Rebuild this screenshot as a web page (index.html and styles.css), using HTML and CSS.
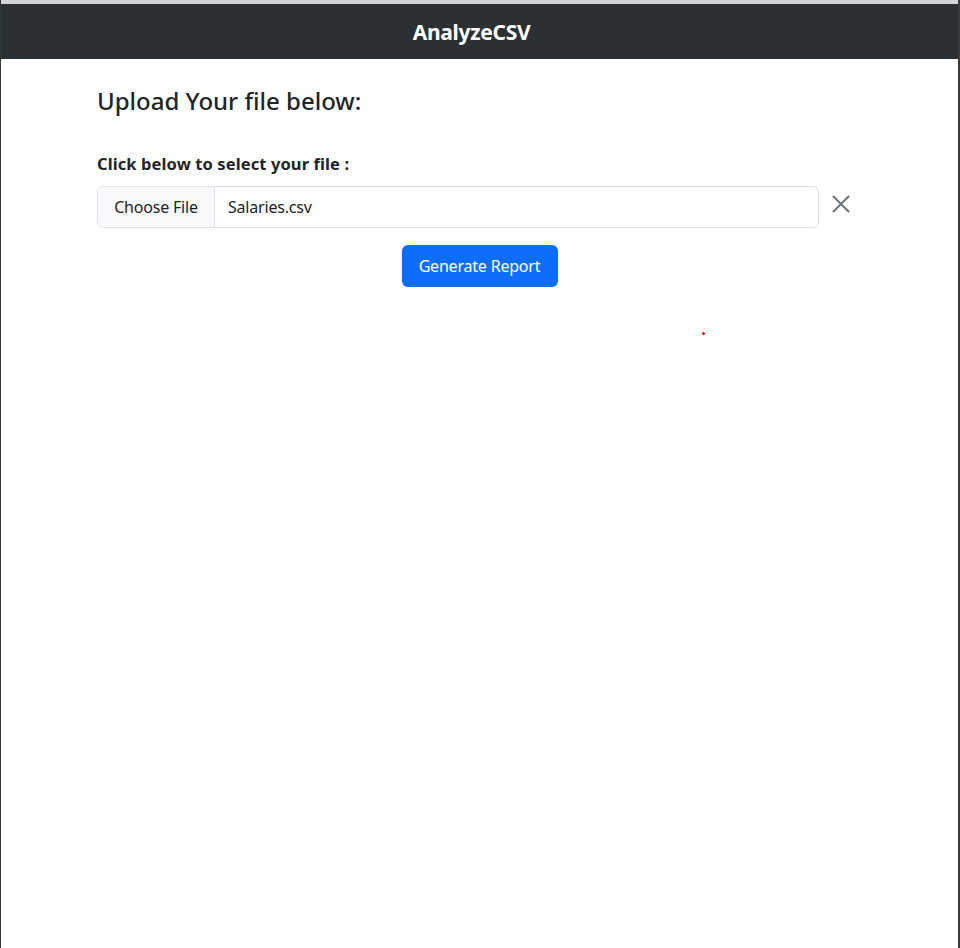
FILE: index.html
```html
<!DOCTYPE html>
<html>
<head>
<meta charset="utf-8">
<link rel="stylesheet" href="styles.css">
</head>
<body>
<div class="frame">
  <div class="topstrip"></div>
  <nav class="navbar"><span class="brand">AnalyzeCSV</span></nav>
  <main class="content">
    <h1 class="title">Upload Your file below:</h1>
    <label class="label">Click below to select your file :</label>
    <div class="file-row">
      <div class="file-input">
        <span class="file-btn">Choose File</span>
        <span class="file-name">Salaries.csv</span>
      </div>
      <svg class="close" width="20" height="20" viewBox="0 0 20 20">
        <path d="M2 2 L18 18 M18 2 L2 18" stroke="#6c757d" stroke-width="2" fill="none"/>
      </svg>
    </div>
    <div class="actions">
      <button class="btn">Generate Report</button>
    </div>
    <div class="dot-row"><span class="dot"></span></div>
  </main>
</div>
</body>
</html>
```
FILE: styles.css
```css
html, body {
  margin: 0;
  padding: 0;
  background: #ffffff;
}
body {
  font-family: "Noto Sans", "Open Sans", sans-serif;
  color: #212529;
}
.frame {
  width: 960px;
  height: 948px;
  box-sizing: border-box;
  border-left: 1px solid #2d3a2f;
  border-right: 2px solid #3a3a3a;
  overflow: hidden;
}
.topstrip {
  height: 4px;
  background: #d4d6d8;
}
.navbar {
  height: 55px;
  background: #2b3035;
  display: flex;
  align-items: center;
  justify-content: center;
}
.brand {
  color: #ffffff;
  font-weight: 700;
  font-size: 21px;
  letter-spacing: -0.3px;
  margin-right: 16px;
}
.content {
  padding: 0 0 0 96px;
}
.title {
  margin: 27px 0 0 0;
  font-size: 24px;
  font-weight: 500;
  line-height: 30px;
  letter-spacing: 0;
}
.label {
  display: block;
  margin-top: 36px;
  font-size: 16.5px;
  font-weight: 700;
  line-height: 24px;
  letter-spacing: 0.1px;
}
.file-row {
  display: flex;
  align-items: center;
  margin-top: 10px;
}
.file-input {
  width: 722px;
  height: 42px;
  box-sizing: border-box;
  border: 1px solid #dee2e6;
  border-radius: 6px;
  display: flex;
  overflow: hidden;
  font-size: 16px;
}
.file-btn {
  width: 117px;
  box-sizing: border-box;
  background: #f8f9fa;
  border-right: 1px solid #dee2e6;
  display: flex;
  align-items: center;
  justify-content: center;
  letter-spacing: -0.2px;
}
.file-name {
  display: flex;
  align-items: center;
  padding-left: 13px;
  letter-spacing: -0.2px;
}
.close {
  margin-left: 12px;
  margin-top: -6px;
}
.actions {
  display: flex;
  justify-content: center;
  margin-top: 17px;
  margin-left: -96px;
}
.btn {
  font-family: inherit;
  width: 156px;
  height: 42px;
  background: #0d6efd;
  color: #ffffff;
  border: none;
  border-radius: 6px;
  font-size: 16px;
  letter-spacing: -0.2px;
  padding: 0;
}
.dot-row {
  padding-left: 605px;
  margin-top: 45px;
}
.dot {
  display: block;
  width: 3px;
  height: 3px;
  background: #ff0000;
  border-radius: 50%;
}
```
